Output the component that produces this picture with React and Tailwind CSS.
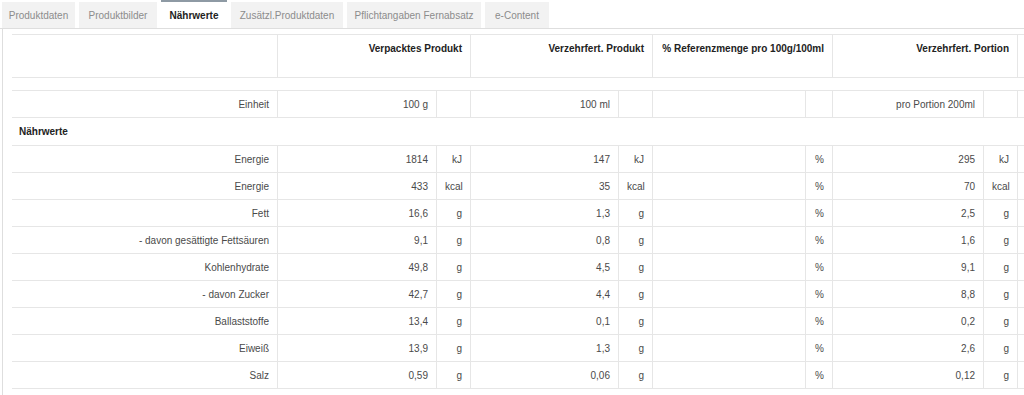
import React from "react";

const tabs = [
  { label: "Produktdaten", w: "w-[73px]" },
  { label: "Produktbilder", w: "w-[78px]" },
  { label: "Nährwerte", w: "w-[66px]", active: true },
  { label: "Zusätzl.Produktdaten", w: "w-[112px]" },
  { label: "Pflichtangaben Fernabsatz", w: "w-[134px]" },
  { label: "e-Content", w: "w-[64px]" },
];

const rows = [
  ["Energie", "1814", "kJ", "147", "kJ", "%", "295", "kJ"],
  ["Energie", "433", "kcal", "35", "kcal", "%", "70", "kcal"],
  ["Fett", "16,6", "g", "1,3", "g", "%", "2,5", "g"],
  ["- davon gesättigte Fettsäuren", "9,1", "g", "0,8", "g", "%", "1,6", "g"],
  ["Kohlenhydrate", "49,8", "g", "4,5", "g", "%", "9,1", "g"],
  ["- davon Zucker", "42,7", "g", "4,4", "g", "%", "8,8", "g"],
  ["Ballaststoffe", "13,4", "g", "0,1", "g", "%", "0,2", "g"],
  ["Eiweiß", "13,9", "g", "1,3", "g", "%", "2,6", "g"],
  ["Salz", "0,59", "g", "0,06", "g", "%", "0,12", "g"],
];

const cell = "border-r border-b border-[#e6e6e6] px-[8px] text-right align-middle";

export default function App() {
  return (
    <div
      className="w-[1024px] h-[395px] overflow-hidden bg-white text-[10px] text-[#4a4a4a]"
      style={{ fontFamily: '"Liberation Sans", Arial, sans-serif' }}
    >
      {/* Tabs */}
      <div className="flex items-end gap-[4px] h-[29px] pl-[2px] border-b border-[#dedede]">
        {tabs.map((t) =>
          t.active ? (
            <div
              key={t.label}
              className={`${t.w} h-[28px] flex items-center justify-center border-t-2 border-[#8e9aa4] bg-white font-bold text-[#222] text-[10px]`}
            >
              {t.label}
            </div>
          ) : (
            <div
              key={t.label}
              className={`${t.w} h-[26px] flex items-center justify-center bg-[#f2f2f2] text-[#8c8c8c] text-[10px]`}
            >
              {t.label}
            </div>
          )
        )}
      </div>

      {/* Panel */}
      <div className="ml-[2px] border-l border-[#dedede] pl-[9px] pt-[5px] h-[366px] overflow-hidden">
        <table className="table-fixed border-separate border-spacing-0 w-[1120px]">
          <colgroup>
            <col className="w-[266px]" />
            <col className="w-[159px]" />
            <col className="w-[34px]" />
            <col className="w-[148px]" />
            <col className="w-[34px]" />
            <col className="w-[153px]" />
            <col className="w-[27px]" />
            <col className="w-[151px]" />
            <col className="w-[34px]" />
            <col className="w-[114px]" />
          </colgroup>
          <tbody>
            <tr className="h-[44px]">
              <td className="border-t border-r border-b border-[#e6e6e6]" />
              {[
                "Verpacktes Produkt",
                "Verzehrfert. Produkt",
                "% Referenzmenge pro 100g/100ml",
                "Verzehrfert. Portion",
              ].map((h) => (
                <td
                  key={h}
                  colSpan={2}
                  className="border-t border-r border-b border-[#e6e6e6] px-[8px] pt-[8px] text-right align-top font-bold text-[#222] leading-[12px]"
                >
                  {h}
                </td>
              ))}
              <td className="border-t border-r border-b border-[#e6e6e6]" />
            </tr>
            <tr className="h-[13px]">
              <td colSpan={10} className="border-b border-[#e6e6e6] p-0" />
            </tr>
            <tr className="h-[27px]">
              <td className={cell}>Einheit</td>
              <td className={cell}>100 g</td>
              <td className={cell} />
              <td className={cell}>100 ml</td>
              <td className={cell} />
              <td className={cell} />
              <td className={cell} />
              <td className={cell}>pro Portion 200ml</td>
              <td className={cell} />
              <td className={cell} />
            </tr>
            <tr className="h-[28px]">
              <td
                colSpan={10}
                className="border-b border-[#e6e6e6] pl-[7px] align-middle font-bold text-[#222]"
              >
                Nährwerte
              </td>
            </tr>
            {rows.map((r, i) => (
              <tr key={i} className="h-[27px]">
                <td className={cell}>{r[0]}</td>
                <td className={cell}>{r[1]}</td>
                <td className={cell}>{r[2]}</td>
                <td className={cell}>{r[3]}</td>
                <td className={cell}>{r[4]}</td>
                <td className={cell} />
                <td className={cell}>{r[5]}</td>
                <td className={cell}>{r[6]}</td>
                <td className={cell}>{r[7]}</td>
                <td className={cell} />
              </tr>
            ))}
          </tbody>
        </table>
      </div>
    </div>
  );
}
